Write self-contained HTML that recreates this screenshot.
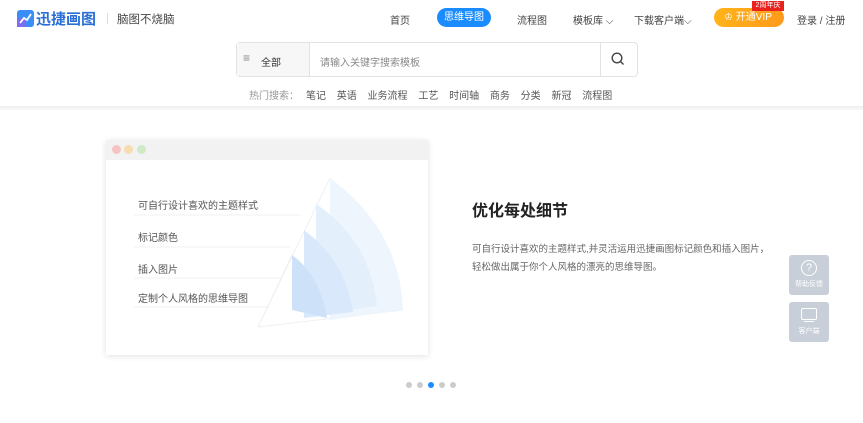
<!DOCTYPE html>
<html><head><meta charset="utf-8"><style>
*{margin:0;padding:0;box-sizing:border-box}
body{width:863px;height:423px;background:#fff;font-family:"Liberation Sans","Noto Sans CJK SC",sans-serif;position:relative;overflow:hidden;color:#333}
.a{position:absolute;white-space:nowrap}
.nav{font-size:10px;color:#444;top:12px}
.hot{font-size:10px;color:#555;top:87px}
.side{position:absolute;left:789px;width:40px;height:40px;background:#c8cfd8;border-radius:3px;color:#fff;font-size:7px;text-align:center}
</style></head><body>
<div class="a" style="left:0;top:106px;width:863px;height:4px;background:linear-gradient(#eee,#fafafa)"></div>
<svg class="a" style="left:17px;top:10px" width="17" height="17" viewBox="0 0 17 17"><rect width="17" height="17" rx="3" fill="#3b8df7"/><rect x="0" y="8" width="9" height="9" fill="#7b6cf2"/><path d="M3 13 L7 8 L10 10 L14 4" stroke="#fff" stroke-width="1.8" fill="none"/></svg>
<div class="a" style="left:36px;top:8px;font-size:15px;font-weight:bold;color:#2a6fd6">迅捷画图</div>
<div class="a" style="left:107px;top:13px;width:1px;height:11px;background:#ddd"></div>
<div class="a" style="left:117px;top:11px;font-size:11.5px;color:#444">脑图不烧脑</div>
<div class="a nav" style="left:390px">首页</div>
<div class="a" style="left:437px;top:8px;width:54px;height:19px;border-radius:10px;background:#1a8cff;color:#fff;font-size:10px;text-align:center;line-height:19px">思维导图</div>
<div class="a nav" style="left:517px">流程图</div>
<div class="a nav" style="left:573px">模板库 ⌵</div>
<div class="a nav" style="left:634px">下载客户端⌵</div>
<div class="a" style="left:714px;top:8px;width:70px;height:19px;border-radius:10px;background:linear-gradient(90deg,#ffb31a,#ff9a1a);color:#fff;font-size:10px;line-height:19px;padding-left:10px">♔ 开通VIP</div>
<div class="a" style="left:752px;top:1px;width:32px;height:10px;background:#e8231e;color:#fff;font-size:7px;line-height:10px;text-align:center">2周年庆</div>
<div class="a nav" style="left:797px">登录 / 注册</div>
<div class="a" style="left:236px;top:42px;width:402px;height:35px;border:1px solid #e3e3e3;border-radius:4px"></div>
<div class="a" style="left:237px;top:43px;width:73px;height:33px;background:#f7f7f7;border-right:1px solid #e3e3e3"></div>
<div class="a" style="left:600px;top:43px;width:1px;height:33px;background:#e3e3e3"></div>
<div class="a" style="left:243px;top:51px;font-size:12px;color:#888">≡</div>
<div class="a" style="left:261px;top:54px;font-size:10px;color:#333">全部</div>
<div class="a" style="left:320px;top:54px;font-size:10px;color:#888">请输入关键字搜索模板</div>
<svg class="a" style="left:611px;top:52px" width="14" height="14" viewBox="0 0 14 14"><circle cx="6" cy="6" r="4.8" stroke="#444" stroke-width="1.4" fill="none"/><path d="M9.5 9.5L12.5 12.5" stroke="#444" stroke-width="1.4"/></svg>
<div class="a hot" style="left:249px;color:#999">热门搜索：</div>
<div class="a hot" style="left:306px;word-spacing:8px">笔记 英语 业务流程 工艺 时间轴 商务 分类 新冠 流程图</div>
<div class="a" style="left:106px;top:140px;width:322px;height:215px;background:#fff;box-shadow:0 1px 6px rgba(0,0,0,.12)"></div>
<div class="a" style="left:106px;top:140px;width:322px;height:20px;background:#f2f2f2"></div>
<div class="a" style="left:112px;top:145px;width:9px;height:9px;border-radius:50%;background:#f5c3c3"></div>
<div class="a" style="left:124px;top:145px;width:9px;height:9px;border-radius:50%;background:#f7dcb0"></div>
<div class="a" style="left:137px;top:145px;width:9px;height:9px;border-radius:50%;background:#cfeac4"></div>
<svg class="a" style="left:106px;top:160px" width="322" height="195" viewBox="106 160 322 195">
<g stroke="#eef0f3" fill="none"><path d="M134 215H300M134 247H290M134 278H280M134 307H270"/><path d="M258 327L330 178M258 327L403 310M258 327L292 255"/></g>
<path d="M330 178Q400 230 403 310L330 320Z" fill="#eef5fd"/>
<path d="M316 204Q370 240 377 306L316 315Z" fill="#e4effc"/>
<path d="M304 230Q345 260 353 312L304 318Z" fill="#d9e9fb"/>
<path d="M292 255Q320 275 327 318L292 310Z" fill="#cde2f9"/>
</svg>
<div class="a" style="left:138px;top:197px;font-size:10px;color:#555">可自行设计喜欢的主题样式</div>
<div class="a" style="left:138px;top:229px;font-size:10px;color:#555">标记颜色</div>
<div class="a" style="left:138px;top:261px;font-size:10px;color:#555">插入图片</div>
<div class="a" style="left:138px;top:290px;font-size:10px;color:#555">定制个人风格的思维导图</div>
<div class="a" style="left:472px;top:197px;font-size:16px;font-weight:bold;color:#222">优化每处细节</div>
<div class="a" style="left:472px;top:241px;font-size:9.5px;color:#666;line-height:18px">可自行设计喜欢的主题样式,并灵活运用迅捷画图标记颜色和插入图片，<br>轻松做出属于你个人风格的漂亮的思维导图。</div>
<div class="a" style="left:406px;top:382px;width:6px;height:6px;border-radius:50%;background:#ccc"></div>
<div class="a" style="left:417px;top:382px;width:6px;height:6px;border-radius:50%;background:#ccc"></div>
<div class="a" style="left:428px;top:382px;width:6px;height:6px;border-radius:50%;background:#1a8cff"></div>
<div class="a" style="left:439px;top:382px;width:6px;height:6px;border-radius:50%;background:#ccc"></div>
<div class="a" style="left:450px;top:382px;width:6px;height:6px;border-radius:50%;background:#ccc"></div>
<div class="side" style="top:255px"><div style="margin:5px auto 0;width:16px;height:16px;border:1.3px solid #fff;border-radius:50%;font-size:11px;line-height:14px">?</div><div style="margin-top:3px">帮助反馈</div></div>
<div class="side" style="top:302px"><div style="margin:6px auto 0;width:16px;height:12px;border:1.3px solid #fff;border-radius:2px"></div><div style="margin:1px auto 0;width:10px;height:1.3px;background:#fff"></div><div style="margin-top:4px">客户端</div></div>
</body></html>
